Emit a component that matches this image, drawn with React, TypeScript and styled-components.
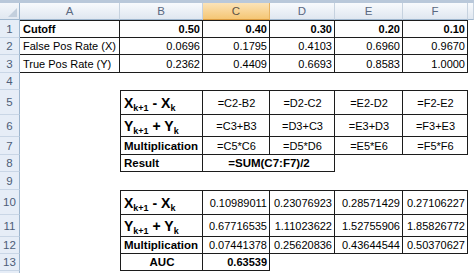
import React from "react";
import styled, { createGlobalStyle, css } from "styled-components";

const GlobalStyle = createGlobalStyle`
  html, body {
    margin: 0;
    padding: 0;
    background: #ffffff;
  }
  body {
    font-family: "Liberation Sans", Arial, sans-serif;
    overflow: hidden;
  }
`;

type Align = "left" | "right" | "center";

type Cell = {
  v?: React.ReactNode;
  align?: Align;
  bold?: boolean;
  span?: number;
  edges?: string; // any of t r b l
};

const COLS = ["A", "B", "C", "D", "E", "F", "G"];
const ACTIVE_COL = "C";
const ROW_HEIGHTS = [18, 17, 18, 17, 25, 22, 18, 17, 18, 25, 22, 17, 17, 18];
// only the top edge of row 14 shows in the window
const VISIBLE_ROWS = 13;

const Frame = styled.div`
  width: 474px;
  height: 273px;
  overflow: hidden;
  display: flex;
  flex-direction: column;
`;

const TopStrip = styled.div`
  height: 3px;
  background: #b9c8da;
  flex: none;
`;

const Sheet = styled.div`
  display: grid;
  grid-template-columns: 20px 100px 83px 67px 65px 68px 65px 1fr;
  grid-template-rows: 17px ${ROW_HEIGHTS.map((h) => `${h}px`).join(" ")};
  flex: 1;
  overflow: hidden;
`;

const Corner = styled.div`
  position: relative;
  background: linear-gradient(#f4f7fb, #e1e8f1);
  border-right: 1px solid #9eb6ce;
  border-bottom: 1px solid #9eb6ce;
  box-sizing: border-box;

  &::after {
    content: "";
    position: absolute;
    right: 2px;
    bottom: 2px;
    border-style: solid;
    border-width: 0 0 9px 9px;
    border-color: transparent transparent #c3cfdd transparent;
  }
`;

const ColHead = styled.div<{ $active?: boolean }>`
  display: flex;
  align-items: center;
  justify-content: center;
  font-size: 11.5px;
  color: #5a6880;
  background: linear-gradient(#f8fafd, #e0e7f0);
  border-right: 1px solid #c6d2df;
  border-bottom: 1px solid #9eb6ce;
  box-sizing: border-box;
  overflow: hidden;

  ${({ $active }) =>
    $active &&
    css`
      background: linear-gradient(#fbe3b8, #f5c674);
      border-right-color: #e8b463;
      border-bottom-color: #d99a3f;
      color: #5e5546;
    `}
`;

const RowHead = styled.div`
  display: flex;
  align-items: center;
  justify-content: center;
  font-size: 11.5px;
  color: #4d5d78;
  background: #e6edf7;
  border-right: 1px solid #9eb6ce;
  border-bottom: 1px solid #c9d6e6;
  box-sizing: border-box;
`;

const CellBox = styled.div<{
  $align: Align;
  $bold?: boolean;
  $span: number;
  $edges: string;
}>`
  grid-column: span ${({ $span }) => $span};
  display: flex;
  align-items: center;
  justify-content: ${({ $align }) =>
    $align === "left" ? "flex-start" : $align === "right" ? "flex-end" : "center"};
  padding: 0 2px 0 3px;
  font-size: 11px;
  font-weight: ${({ $bold }) => ($bold ? 700 : 400)};
  color: #000000;
  white-space: nowrap;
  overflow: hidden;
  box-sizing: border-box;
  border-top: ${({ $edges }) => ($edges.includes("t") ? "1px solid #1c1c1c" : "0")};
  border-right: ${({ $edges }) => ($edges.includes("r") ? "1px solid #1c1c1c" : "0")};
  border-bottom: ${({ $edges }) => ($edges.includes("b") ? "1px solid #1c1c1c" : "0")};
  border-left: ${({ $edges }) => ($edges.includes("l") ? "1px solid #1c1c1c" : "0")};
`;

const LabelText = styled.span`
  font-size: 11.5px;
  font-weight: 700;
`;

const BigLabel = styled.span`
  font-size: 14px;
  font-weight: 700;
  line-height: 1;
`;

const Sub = styled.span`
  font-size: 9px;
  font-weight: 700;
  position: relative;
  top: 3px;
`;

const XLabel = (
  <BigLabel>
    X<Sub>k+1</Sub> - X<Sub>k</Sub>
  </BigLabel>
);

const YLabel = (
  <BigLabel>
    Y<Sub>k+1</Sub> + Y<Sub>k</Sub>
  </BigLabel>
);

const empty: Cell = {};
const num = (v: string, edges: string, bold = false): Cell => ({
  v,
  align: "right",
  bold,
  edges,
});
const mid = (v: string, edges: string): Cell => ({ v, align: "center", edges });
const label = (v: string, edges: string, align: Align = "left"): Cell => ({
  v: <LabelText>{v}</LabelText>,
  align,
  edges,
});

const rows: Cell[][] = [
  [
    { v: "Cutoff", bold: true, align: "left", edges: "trb" },
    num("0.50", "trb", true),
    num("0.40", "trb", true),
    num("0.30", "trb", true),
    num("0.20", "trb", true),
    num("0.10", "trb", true),
    empty,
  ],
  [
    { v: "False Pos Rate (X)", align: "left", edges: "rb" },
    num("0.0696", "rb"),
    num("0.1795", "rb"),
    num("0.4103", "rb"),
    num("0.6960", "rb"),
    num("0.9670", "rb"),
    empty,
  ],
  [
    { v: "True Pos Rate (Y)", align: "left", edges: "rb" },
    num("0.2362", "rb"),
    num("0.4409", "rb"),
    num("0.6693", "rb"),
    num("0.8583", "rb"),
    num("1.0000", "rb"),
    empty,
  ],
  [empty, empty, empty, empty, empty, empty, empty],
  [
    empty,
    { v: XLabel, align: "left", edges: "tlrb" },
    mid("=C2-B2", "trb"),
    mid("=D2-C2", "trb"),
    mid("=E2-D2", "trb"),
    mid("=F2-E2", "trb"),
    empty,
  ],
  [
    empty,
    { v: YLabel, align: "left", edges: "lrb" },
    mid("=C3+B3", "rb"),
    mid("=D3+C3", "rb"),
    mid("=E3+D3", "rb"),
    mid("=F3+E3", "rb"),
    empty,
  ],
  [
    empty,
    label("Multiplication", "lrb"),
    mid("=C5*C6", "rb"),
    mid("=D5*D6", "rb"),
    mid("=E5*E6", "rb"),
    mid("=F5*F6", "rb"),
    empty,
  ],
  [
    empty,
    label("Result", "lrb"),
    { v: <LabelText>=SUM(C7:F7)/2</LabelText>, align: "center", span: 2, edges: "rb" },
    empty,
    empty,
    empty,
  ],
  [empty, empty, empty, empty, empty, empty, empty],
  [
    empty,
    { v: XLabel, align: "left", edges: "tlrb" },
    num("0.10989011", "trb"),
    num("0.23076923", "trb"),
    num("0.28571429", "trb"),
    num("0.27106227", "trb"),
    empty,
  ],
  [
    empty,
    { v: YLabel, align: "left", edges: "lrb" },
    num("0.67716535", "rb"),
    num("1.11023622", "rb"),
    num("1.52755906", "rb"),
    num("1.85826772", "rb"),
    empty,
  ],
  [
    empty,
    label("Multiplication", "lrb"),
    num("0.07441378", "rb"),
    num("0.25620836", "rb"),
    num("0.43644544", "rb"),
    num("0.50370627", "rb"),
    empty,
  ],
  [
    empty,
    label("AUC", "lrb", "center"),
    num("0.63539", "rb", true),
    empty,
    empty,
    empty,
    empty,
  ],
  [empty, empty, empty, empty, empty, empty, empty],
];

export default function App() {
  return (
    <>
      <GlobalStyle />
      <Frame>
        <TopStrip />
        <Sheet>
          <Corner />
          {COLS.map((c) => (
            <ColHead key={c} $active={c === ACTIVE_COL}>
              {c === "G" ? "" : c}
            </ColHead>
          ))}
          {rows.map((cells, r) => (
            <React.Fragment key={r}>
              <RowHead>{r < VISIBLE_ROWS ? r + 1 : ""}</RowHead>
              {cells.map((cell, i) => (
                <CellBox
                  key={i}
                  $align={cell.align ?? "left"}
                  $bold={cell.bold}
                  $span={cell.span ?? 1}
                  $edges={cell.edges ?? ""}
                >
                  {cell.v}
                </CellBox>
              ))}
            </React.Fragment>
          ))}
        </Sheet>
      </Frame>
    </>
  );
}
